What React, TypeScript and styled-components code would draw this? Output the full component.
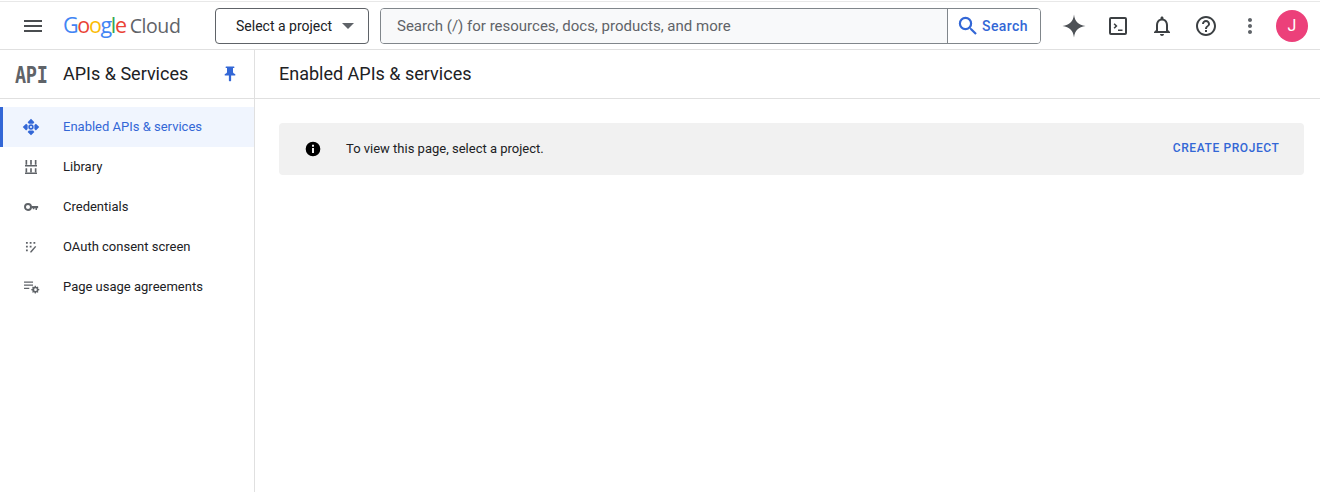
import React from "react";
import styled, { createGlobalStyle } from "styled-components";

const Global = createGlobalStyle`
  html, body { margin: 0; padding: 0; background: #fff; }
  body { font-family: Roboto, "Liberation Sans", sans-serif; color: #202124; }
  * { box-sizing: border-box; }
`;
const Page = styled.div`
  width: 1320px; height: 492px; display: flex; flex-direction: column; overflow: hidden; background: #fff; padding-top: 1px;
`;
const TopBar = styled.header`
  height: 49px; flex: none; display: flex; align-items: center;
  border-top: 1px solid #e8e8e8; border-bottom: 1px solid #e0e0e0;
  padding: 0 12px 0 21px;
`;
const MenuBtn = styled.button`
  width: 24px; height: 24px; padding: 0; border: 0; background: none; display: flex; align-items: center; justify-content: center; color: #4a4d50; margin-right: 18px;
`;
const Logo = styled.div`
  width: 119px; margin-right: 33px; white-space: nowrap; font-family: "Open Sans", sans-serif; font-size: 19.5px; letter-spacing: -0.4px; line-height: 24px; color: #5f6368;
`;
const Wordmark = styled.span`
  font-size: 21.5px; font-weight: 500; letter-spacing: -1.35px; margin-right: 4px;
`;
const L = styled.span<{ $c: string }>` color: ${p => p.$c}; `;
const ProjectBtn = styled.button`
  width: 154px; height: 36px; flex: none; border: 1px solid #5f6368; border-radius: 4px; background: #fff; display: flex; align-items: center; padding: 0 14px 0 20px; justify-content: space-between;
  font: 400 14px Roboto, sans-serif; color: #202124;
`;
const Caret = styled.span`
  width: 0; height: 0; border-left: 6px solid transparent; border-right: 6px solid transparent; border-top: 6px solid #5f6368;
`;
const SearchBox = styled.div`
  width: 661px; height: 36px; flex: none; margin-left: 11px; display: flex; border: 1px solid #80868b; border-radius: 4px; overflow: hidden;
`;
const SearchText = styled.div`
  flex: 1; background: #f8f9fa; color: #5f6368; font-size: 15px; padding-left: 16px; display: flex; align-items: center; border-right: 1px solid #80868b;
`;
const SearchBtn = styled.div`
  width: 92px; flex: none; display: flex; align-items: center; gap: 2px; padding-left: 8px; font-size: 14px; font-weight: 500; letter-spacing: 0.4px; color: #3367d6; background: #fff;
`;
const IconRow = styled.div`
  display: flex; align-items: center; margin-left: 11px;
`;
const IconBtn = styled.div<{ $c?: string }>`
  width: 44px; height: 44px; display: flex; align-items: center; justify-content: center; color: ${p => p.$c ?? "#3c4043"};
`;
const Avatar = styled.div`
  width: 32px; height: 32px; border-radius: 50%; background: #ec407a; color: #fff; font-size: 16px; display: flex; align-items: center; justify-content: center; margin-left: 4px;
`;
const Body = styled.div`
  flex: 1; display: flex; min-height: 0;
`;
const Side = styled.aside`
  width: 255px; flex: none; border-right: 1px solid #e0e0e0;
`;
const SideHead = styled.div`
  height: 49px; border-bottom: 1px solid #e0e0e0; display: flex; align-items: center; padding: 0 0 2px 15px;
`;
const ApiMark = styled.span`
  width: 48px; flex: none; font-family: "DejaVu Sans Mono", monospace; font-weight: 700; font-size: 18.5px; letter-spacing: -0.3px; color: #5f6368; line-height: 24px;
  display: inline-block; transform: translateY(2.5px) scaleY(1.22); transform-origin: 50% 55%;
`;
const SideTitle = styled.div`
  flex: 1; font-size: 18px; color: #202124;
`;
const PinWrap = styled.div`
  width: 18px; height: 18px; margin: 2px 15px 0 0; color: #3367d6; display: flex;
`;
const Nav = styled.nav`
  padding-top: 8px;
`;
const Item = styled.div<{ $active?: boolean }>`
  height: 40px; display: flex; align-items: center; font-size: 13px;
  padding-left: ${p => (p.$active ? "19px" : "22px")};
  border-left: ${p => (p.$active ? "3px solid #3367d6" : "0")};
  background: ${p => (p.$active ? "#f0f5fe" : "transparent")};
  color: ${p => (p.$active ? "#3367d6" : "#202124")};
`;
const ItemLabel = styled.span` margin-bottom: 2px; `;
const ItemIcon = styled.span<{ $c?: string }>`
  width: 18px; height: 18px; flex: none; margin-right: 23px; display: flex; color: ${p => p.$c ?? "#5f6368"};
`;
const Main = styled.main`
  flex: 1; min-width: 0;
`;
const MainHead = styled.div`
  height: 49px; border-bottom: 1px solid #e0e0e0; display: flex; align-items: center; padding: 0 0 2px 24px; font-size: 18px; color: #202124;
`;
const Banner = styled.div`
  margin: 24px 16px 0 24px; height: 52px; background: #f1f1f1; border-radius: 4px; display: flex; align-items: center; padding: 0 25px 0 26px; font-size: 13px; color: #202124;
`;
const InfoWrap = styled.span`
  width: 16px; height: 16px; margin-right: 25px; display: flex; flex: none; color: #000;
`;
const BannerText = styled.div` flex: 1; margin-bottom: 2px; `;
const Action = styled.div`
  font-size: 12px; font-weight: 500; letter-spacing: 0.6px; margin-right: -0.5px; margin-bottom: 2px; color: #3367d6;
`;

const S = (p: { children: React.ReactNode; size?: number }) => (
  <svg width={p.size ?? 18} height={p.size ?? 18} viewBox="0 0 24 24" fill="currentColor" aria-hidden>{p.children}</svg>
);

export default function App() {
  return (
    <Page>
      <Global />
      <TopBar>
        <MenuBtn>
          <svg width="20" height="14" viewBox="0 0 20 14" fill="currentColor"><rect x="1" y="1" width="18" height="2" /><rect x="1" y="6" width="18" height="2" /><rect x="1" y="11" width="18" height="2" /></svg>
        </MenuBtn>
        <Logo>
          <Wordmark><L $c="#4285f4">G</L><L $c="#ea4335">o</L><L $c="#fbbc05">o</L><L $c="#4285f4">g</L><L $c="#34a853">l</L><L $c="#ea4335">e</L></Wordmark>Cloud
        </Logo>
        <ProjectBtn>Select a project<Caret /></ProjectBtn>
        <SearchBox>
          <SearchText>Search (/) for resources, docs, products, and more</SearchText>
          <SearchBtn>
            <S size={24}><path d="M15.7 14.2h-.8l-.28-.27A6.6 6.6 0 0 0 16.2 9.5 6.7 6.7 0 1 0 9.500 16.200c1.650 0 3.170-.6 4.340-1.600l.27.28v.8l5.150 5.120 1.530-1.530-5.090-5.070zm-6.200-.2a4.500 4.500 0 1 1 0-9 4.500 4.500 0 0 1 0 9z" /></S>
            Search
          </SearchBtn>
        </SearchBox>
        <IconRow>
          <IconBtn $c="#4d5156">
            <S size={24}><path d="M12 0.5C12.8 7.5 16.5 11.2 23.5 12 16.5 12.8 12.8 16.5 12 23.5 11.2 16.5 7.5 12.8 0.5 12 7.5 11.2 11.2 7.5 12 0.5z" /></S>
          </IconBtn>
          <IconBtn>
            <S size={24}>
              <rect x="4" y="4" width="16" height="16" rx="1" fill="none" stroke="currentColor" strokeWidth="2" />
              <path d="M7.600 10.300 8.700 9.200 11.500 12 8.700 14.800 7.600 13.700 9.300 12zM12 15.500h4.500V17H12z" />
            </S>
          </IconBtn>
          <IconBtn>
            <S size={24}><path d="M12 22c1.1 0 2-.9 2-2h-4c0 1.1.9 2 2 2zm6-6v-5c0-3.070-1.630-5.640-4.500-6.320V4c0-.830-.670-1.500-1.500-1.500s-1.500.670-1.500 1.500v.680C7.640 5.360 6 7.920 6 11v5l-2 2v1h16v-1l-2-2zm-2 1H8v-6c0-2.480 1.510-4.500 4-4.500s4 2.020 4 4.500v6z" /></S>
          </IconBtn>
          <IconBtn>
            <S size={24}><path d="M11 18h2v-2h-2v2zm1-16C6.480 2 2 6.480 2 12s4.480 10 10 10 10-4.480 10-10S17.520 2 12 2zm0 18c-4.410 0-8-3.590-8-8s3.590-8 8-8 8 3.590 8 8-3.590 8-8 8zm0-14c-2.210 0-4 1.790-4 4h2c0-1.100.9-2 2-2s2 .9 2 2c0 2-3 1.750-3 5h2c0-2.250 3-2.500 3-5 0-2.210-1.790-4-4-4z" /></S>
          </IconBtn>
          <IconBtn $c="#5f6368">
            <S size={24}><path d="M12 8c1.100 0 2-.9 2-2s-.9-2-2-2-2 .9-2 2 .9 2 2 2zm0 2c-1.100 0-2 .9-2 2s.9 2 2 2 2-.9 2-2-.9-2-2-2zm0 6c-1.100 0-2 .9-2 2s.9 2 2 2 2-.9 2-2-.9-2-2-2z" /></S>
          </IconBtn>
          <Avatar>J</Avatar>
        </IconRow>
      </TopBar>
      <Body>
        <Side>
          <SideHead>
            <ApiMark>API</ApiMark>
            <SideTitle>APIs &amp; Services</SideTitle>
            <PinWrap>
              <S size={18}><path d="M16 9V4h1c.550 0 1-.450 1-1s-.450-1-1-1H7c-.550 0-1 .450-1 1s.450 1 1 1h1v5c0 1.660-1.340 3-3 3v2h5.500v7l1.500 1 1.500-1v-7H19v-2c-1.660 0-3-1.340-3-3z" /></S>
            </PinWrap>
          </SideHead>
          <Nav>
            <Item $active>
              <ItemIcon $c="#3367d6">
                <S><circle cx="12" cy="12" r="2.500" fill="none" stroke="currentColor" strokeWidth="2.200" /><path d="M12 1l4.500 4.500-1.700 2h-5.600l-1.700-2zM12 23l4.500-4.500-1.700-2h-5.600l-1.700 2zM1 12l4.500-4.500 2 1.700v5.600l-2 1.700zM23 12l-4.500-4.500-2 1.700v5.600l2 1.700z" /></S>
              </ItemIcon>
              <ItemLabel>Enabled APIs &amp; services</ItemLabel>
            </Item>
            <Item>
              <ItemIcon>
                <S><path d="M4.700 2.700h2.200V9H4.700zM10.900 2.700h2.200V9h-2.200zM17.100 2.700h2.200V9h-2.200zM4 9.300h16v2H4zM4.700 13.500h2.200V19H4.700zM10.900 13.500h2.200V19h-2.200zM17.100 13.500h2.200V19h-2.200zM4 19.300h16v2H4z" /></S>
              </ItemIcon>
              <ItemLabel>Library</ItemLabel>
            </Item>
            <Item>
              <ItemIcon>
                <S>
                  <circle cx="8" cy="12" r="4" fill="none" stroke="currentColor" strokeWidth="2.600" />
                  <path d="M12.500 10.500h9v3h-1.500v2.500h-2v-2.500h-1.500v1.500h-2v-1.500h-2z" />
                </S>
              </ItemIcon>
              <ItemLabel>Credentials</ItemLabel>
            </Item>
            <Item>
              <ItemIcon>
                <S><path d="M5.300 5.300h2.400v2.400H5.300zM10.300 5.300h2.400v2.400h-2.400zM15.300 5.300h2.400v2.400h-2.400zM5.300 10.300h2.400v2.400H5.300zM10.300 10.300h2.400v2.400h-2.400zM5.300 15.300h2.400v2.400H5.300z" /><path d="M11 18 17.500 10.500 19 11.800 12.500 19.300H11z" /></S>
              </ItemIcon>
              <ItemLabel>OAuth consent screen</ItemLabel>
            </Item>
            <Item>
              <ItemIcon>
                <S>
                  <path d="M2.700 4.500h12v1.700h-12zM2.700 8.700h12v1.700h-12zM2.700 12.900h7v1.700h-7z" />
                  <g transform="translate(18 15.500) scale(.72) translate(-16 -16.500)"><path d="M23 17.500v-2l-2-.4-.6-1.400 1.100-1.700-1.400-1.400-1.700 1.100-1.400-.6-.4-2h-2l-.4 2-1.400.6-1.700-1.100-1.400 1.400 1.100 1.700-.6 1.400-2 .4v2l2 .4.6 1.400-1.100 1.700 1.400 1.400 1.700-1.100 1.400.6.4 2h2l.4-2 1.400-.6 1.700 1.100 1.400-1.400-1.100-1.700.6-1.400zM16 19a2.500 2.500 0 1 1 0-5 2.500 2.500 0 0 1 0 5z" /></g>
                </S>
              </ItemIcon>
              <ItemLabel>Page usage agreements</ItemLabel>
            </Item>
          </Nav>
        </Side>
        <Main>
          <MainHead>Enabled APIs &amp; services</MainHead>
          <Banner>
            <InfoWrap>
              <S size={16}><path d="M12 1a11 11 0 1 0 0 22 11 11 0 0 0 0-22zm1.500 17h-3v-7.500h3zm0-9.500h-3V5.500h3z" /></S>
            </InfoWrap>
            <BannerText>To view this page, select a project.</BannerText>
            <Action>CREATE PROJECT</Action>
          </Banner>
        </Main>
      </Body>
    </Page>
  );
}
